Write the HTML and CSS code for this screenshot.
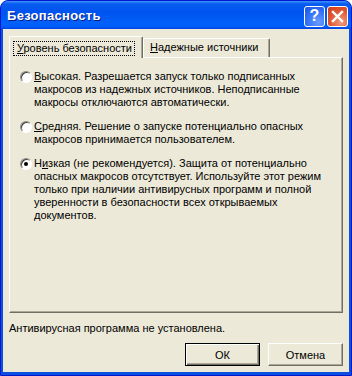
FILE: index.html
```html
<!DOCTYPE html>
<html lang="ru">
<head>
    <meta charset="UTF-8">
    <title>Безопасность</title>
    <link rel="stylesheet" href="styles.css">
</head>
<body>
    <div class="window">
        <div class="titlebar">
            <span class="title">Безопасность</span>
            <div class="title-buttons">
                <button class="cap-btn help">?</button>
                <button class="cap-btn close">
                    <svg width="13" height="13" viewBox="0 0 13 13">
                        <path d="M2 2 L11 11 M11 2 L2 11" stroke="#fff" stroke-width="2.4" stroke-linecap="square"/>
                    </svg>
                </button>
            </div>
        </div>

        <div class="client">
            <div class="tabs">
                <div class="tab active"><span class="focus"><u>У</u>ровень безопасности</span></div>
                <div class="tab"><u>Н</u>адежные источники</div>
            </div>

            <div class="panel">
                <div class="option">
                    <span class="radio"></span>
                    <p><u>В</u>ысокая. Разрешается запуск только подписанных<br>макросов из надежных источников. Неподписанные<br>макросы отключаются автоматически.</p>
                </div>
                <div class="option">
                    <span class="radio"></span>
                    <p><u>С</u>редняя. Решение о запуске потенциально опасных<br>макросов принимается пользователем.</p>
                </div>
                <div class="option">
                    <span class="radio checked"></span>
                    <p>Н<u>и</u>зкая (не рекомендуется). Защита от потенциально<br>опасных макросов отсутствует. Используйте этот режим<br>только при наличии антивирусных программ и полной<br>уверенности в безопасности всех открываемых<br>документов.</p>
                </div>
            </div>

            <div class="status">Антивирусная программа не установлена.</div>

            <div class="actions">
                <button class="btn default">ОК</button>
                <button class="btn">Отмена</button>
            </div>
        </div>
    </div>
</body>
</html>
```

FILE: styles.css
```css
body {
    margin: 0;
    background: #fff;
    font-family: 'Liberation Sans', Arial, sans-serif;
    font-size: 11px;
    color: #000;
}

.window {
    width: 352px;
    height: 376px;
    box-sizing: border-box;
    display: flex;
    flex-direction: column;
    background: #0b4fe0;
    border: 1px solid #0019cf;
    border-radius: 8px 8px 0 0;
    overflow: hidden;
}

.titlebar {
    height: 28px;
    display: flex;
    align-items: center;
    justify-content: space-between;
    padding: 0 3px 0 6px;
    background: linear-gradient(#3d95ff 0%, #0a5cf0 10%, #0053ee 40%, #0062fb 85%, #005af8 92%, #0044dd 100%);
}

.title {
    color: #fff;
    font-weight: bold;
    font-size: 13px;
    letter-spacing: 0.3px;
    text-shadow: 1px 1px 0 #0a1e8a;
    margin-top: 1px;
}

.title-buttons {
    display: flex;
    gap: 2px;
    margin-top: 2px;
}

.cap-btn {
    width: 21px;
    height: 21px;
    padding: 0;
    border: 1px solid #fff;
    border-radius: 3px;
    display: flex;
    align-items: center;
    justify-content: center;
    color: #fff;
    font-family: 'Liberation Sans', Arial, sans-serif;
    font-weight: bold;
    font-size: 16px;
}

.help {
    background: radial-gradient(circle at 70% 80%, #6a9cff, #2f6ef5 60%, #1a52e0);
}

.close {
    background: radial-gradient(circle at 70% 80%, #f09a7c, #e0532f 60%, #c83c1a);
}

.client {
    flex: 1;
    margin: 0 2px 3px 2px;
    padding: 7px 6px 0 6px;
    background: #ece9d8;
    display: flex;
    flex-direction: column;
}

.tabs {
    display: flex;
    align-items: flex-end;
    height: 21px;
    position: relative;
    z-index: 1;
}

.tab {
    box-sizing: border-box;
    height: 19px;
    width: 127px;
    padding: 2px 0 0 6px;
    line-height: 13px;
    border: 1px solid;
    border-color: #fff #716f64 transparent #fff;
    border-bottom: none;
    border-radius: 2px 2px 0 0;
    box-shadow: inset -1px 0 0 #aca899;
    background: #ece9d8;
    white-space: nowrap;
}

.tab.active {
    height: 22px;
    width: 134px;
    margin-bottom: -1px;
    padding: 4px 0 0 3px;
}

.focus {
    display: inline-block;
    border: 1px dotted #000;
    padding: 0 2px 0 3px;
    line-height: 13px;
}

.panel {
    box-sizing: border-box;
    height: 256px;
    border: 1px solid;
    border-color: #fff #716f64 #716f64 #fff;
    box-shadow: inset -1px -1px 0 #aca899;
    padding: 12px 0 0 10px;
}

.option {
    display: flex;
    align-items: flex-start;
    gap: 2px;
    margin-bottom: 11px;
}

.option p {
    margin: 0;
    line-height: 13px;
    white-space: nowrap;
}

.radio {
    box-sizing: border-box;
    width: 12px;
    height: 12px;
    margin-top: 1px;
    border-radius: 50%;
    background: #fff;
    border: 1px solid;
    border-color: #8d8b80 #fff #fff #8d8b80;
    box-shadow: inset 1px 1px 0 #404040, 0 0 0 0 transparent;
    display: flex;
    align-items: center;
    justify-content: center;
}

.radio.checked::after {
    content: "";
    width: 4px;
    height: 4px;
    border-radius: 50%;
    background: #000;
}

.status {
    margin-top: 9px;
    line-height: 13px;
}

.actions {
    display: flex;
    justify-content: flex-end;
    gap: 8px;
    margin-top: 8px;
}

.btn {
    width: 75px;
    height: 23px;
    box-sizing: border-box;
    background: #ece9d8;
    border: 1px solid;
    border-color: #fff #716f64 #716f64 #fff;
    box-shadow: inset -1px -1px 0 #aca899;
    font-family: 'Liberation Sans', Arial, sans-serif;
    font-size: 11px;
    color: #000;
    padding: 0;
}

.btn.default {
    border: 1px solid #000;
    box-shadow: inset 1px 1px 0 #fff, inset -1px -1px 0 #716f64, inset -2px -2px 0 #aca899;
}
```
